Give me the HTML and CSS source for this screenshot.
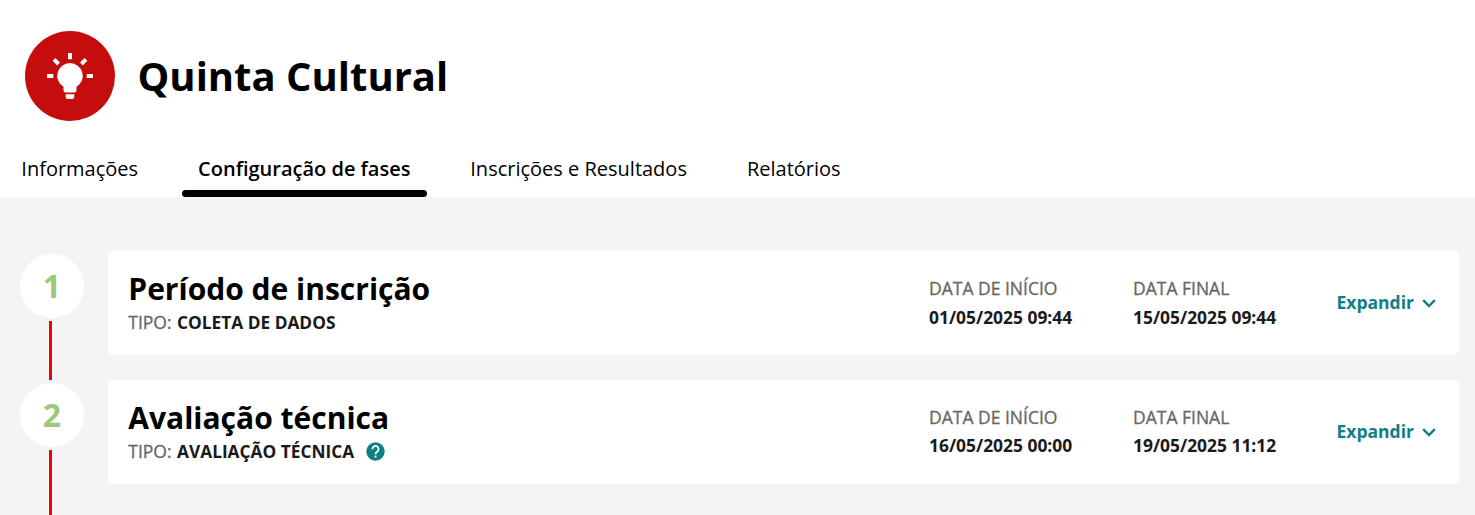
FILE: index.html
```html
<!DOCTYPE html>
<html lang="pt-BR">
<head>
<meta charset="utf-8">
<title>Quinta Cultural</title>
<link rel="stylesheet" href="styles.css">
</head>
<body>
<header class="header">
  <div class="brand">
    <div class="brand-icon">
      <svg width="90" height="90" viewBox="0 0 90 90" fill="#fff">
        <path d="M43 22h4v6.3h-4zM22 43h6.3v4h-6.3zM61.7 43h6.3v4h-6.3zM27.6 29.8l2.8-2.8 4.6 4.6-2.8 2.8zM55 31.6l4.6-4.6 2.8 2.8-4.6 4.6z"/>
        <path d="M45 32a12.8 12.8 0 0 0-6.5 23.8V59q0 2.5 2.5 2.5h8q2.5 0 2.5-2.5v-3.2A12.8 12.8 0 0 0 45 32z"/>
        <path d="M40.7 63.3h8.6v2.5q0 2.2-2.2 2.2h-4.2q-2.2 0-2.2-2.2z"/>
      </svg>
    </div>
    <h1 class="title">Quinta Cultural</h1>
  </div>
  <nav class="tabs">
    <a class="tab">Informações</a>
    <a class="tab active">Configuração de fases</a>
    <a class="tab results">Inscrições e Resultados</a>
    <a class="tab reports">Relatórios</a>
  </nav>
</header>
<main class="timeline">
  <section class="phase">
    <div class="rail"><span class="number">1</span><span class="line"></span></div>
    <article class="card">
      <div class="info"><h2>Período de inscrição</h2><p class="type"><span class="label">TIPO:</span><b>COLETA DE DADOS</b></p></div>
      <div class="date"><span class="label">DATA DE INÍCIO</span><b>01/05/2025 09:44</b></div>
      <div class="date"><span class="label">DATA FINAL</span><b>15/05/2025 09:44</b></div>
      <a class="expand"><span>Expandir</span><svg width="14" height="9" viewBox="0 0 14 9"><path d="M1.2 1.2L7 7l5.8-5.8" fill="none" stroke="currentColor" stroke-width="2.4"/></svg></a>
    </article>
  </section>
  <section class="phase">
    <div class="rail"><span class="number">2</span><span class="line last"></span></div>
    <article class="card">
      <div class="info"><h2>Avaliação técnica</h2><p class="type"><span class="label">TIPO:</span><b>AVALIAÇÃO TÉCNICA</b>
        <svg class="help" width="19" height="19" viewBox="0 0 19 19"><circle cx="9.5" cy="9.5" r="9.2" fill="#117e85"/><path d="M6.4 7.2a3.1 3.1 0 1 1 4.9 2.4Q9.5 10.8 9.5 12.3" fill="none" stroke="#fff" stroke-width="1.8"/><path d="M8.6 13.6h1.9v1.9H8.6z" fill="#fff"/></svg></p></div>
      <div class="date"><span class="label">DATA DE INÍCIO</span><b>16/05/2025 00:00</b></div>
      <div class="date"><span class="label">DATA FINAL</span><b>19/05/2025 11:12</b></div>
      <a class="expand"><span>Expandir</span><svg width="14" height="9" viewBox="0 0 14 9"><path d="M1.2 1.2L7 7l5.8-5.8" fill="none" stroke="currentColor" stroke-width="2.4"/></svg></a>
    </article>
  </section>
</main>
</body>
</html>
```
FILE: styles.css
```css
* { box-sizing: border-box; }
body { margin: 0; height: 515px; overflow: hidden; background: #f4f4f4; font-family: "Open Sans", sans-serif; color: #000; }
.header { background: #fff; height: 197px; padding-top: 31px; }
.brand { display: flex; align-items: center; gap: 22.5px; height: 90px; padding-left: 25px; }
.brand-icon { width: 90px; height: 90px; border-radius: 50%; background: #c50d0d; }
.brand-icon svg { display: block; }
.title { margin: 0; font-size: 40px; line-height: 54px; font-weight: 700; }
.tabs { display: flex; height: 50px; margin-top: 26px; padding-left: 5.3px; }
.tab { font-size: 20px; line-height: 42px; padding: 1px 16px 0; white-space: nowrap; }
.tab.active { position: relative; width: 245px; margin-left: 28px; font-weight: 600; }
.tab.active::after { content: ""; position: absolute; left: 0; bottom: 0; width: 100%; height: 7px; border-radius: 3.5px; background: #000; }
.tab.results { margin-left: 27.2px; }
.tab.reports { margin-left: 28px; }
.timeline { padding: 54px 16px 0 20px; }
.phase { display: flex; height: 129px; gap: 24px; }
.rail { display: flex; flex-direction: column; align-items: center; width: 64px; padding-top: 3px; }
.number { flex: none; width: 64px; height: 64px; border-radius: 50%; background: #fff; color: #9bc97c; font-size: 32px; font-weight: 700; line-height: 64px; text-align: center; }
.line { flex: none; width: 3px; height: 59px; margin: 3px 3px 0 0; background: #e80505; }
.line.last { height: 80px; }
.card { flex: 1; height: 104px; border-radius: 5px; background: #fff; display: flex; padding: 0 23px 0 20px; }
.info { flex: none; width: 801px; padding: 17px 0 0 0.3px; }
.info h2 { margin: 0; font-size: 30px; line-height: 42px; }
.label { color: #666; font-weight: 400; -webkit-text-stroke: 0.3px #666; }
.type { margin: 0; font-size: 17.5px; line-height: 25px; display: flex; }
.type b { margin-left: 5.5px; color: #1a1a1a; font-weight: 700; font-size: 17.3px; }
.help { margin: 2.5px 0 0 11.5px; }
.date { flex: none; width: 204px; font-size: 17.4px; padding-top: 23px; display: flex; flex-direction: column; }
.date .label { height: 29px; line-height: 28px; font-size: 17.5px; }
.date b { color: #1a1a1a; line-height: 28px; }
.phase + .phase .date .label { height: 28px; }
.expand { margin-left: -0.5px; color: #117e85; font-size: 17.5px; font-weight: 700; display: flex; align-items: center; gap: 8px; height: 102px; }
.expand svg { margin-top: 2px; }
```
